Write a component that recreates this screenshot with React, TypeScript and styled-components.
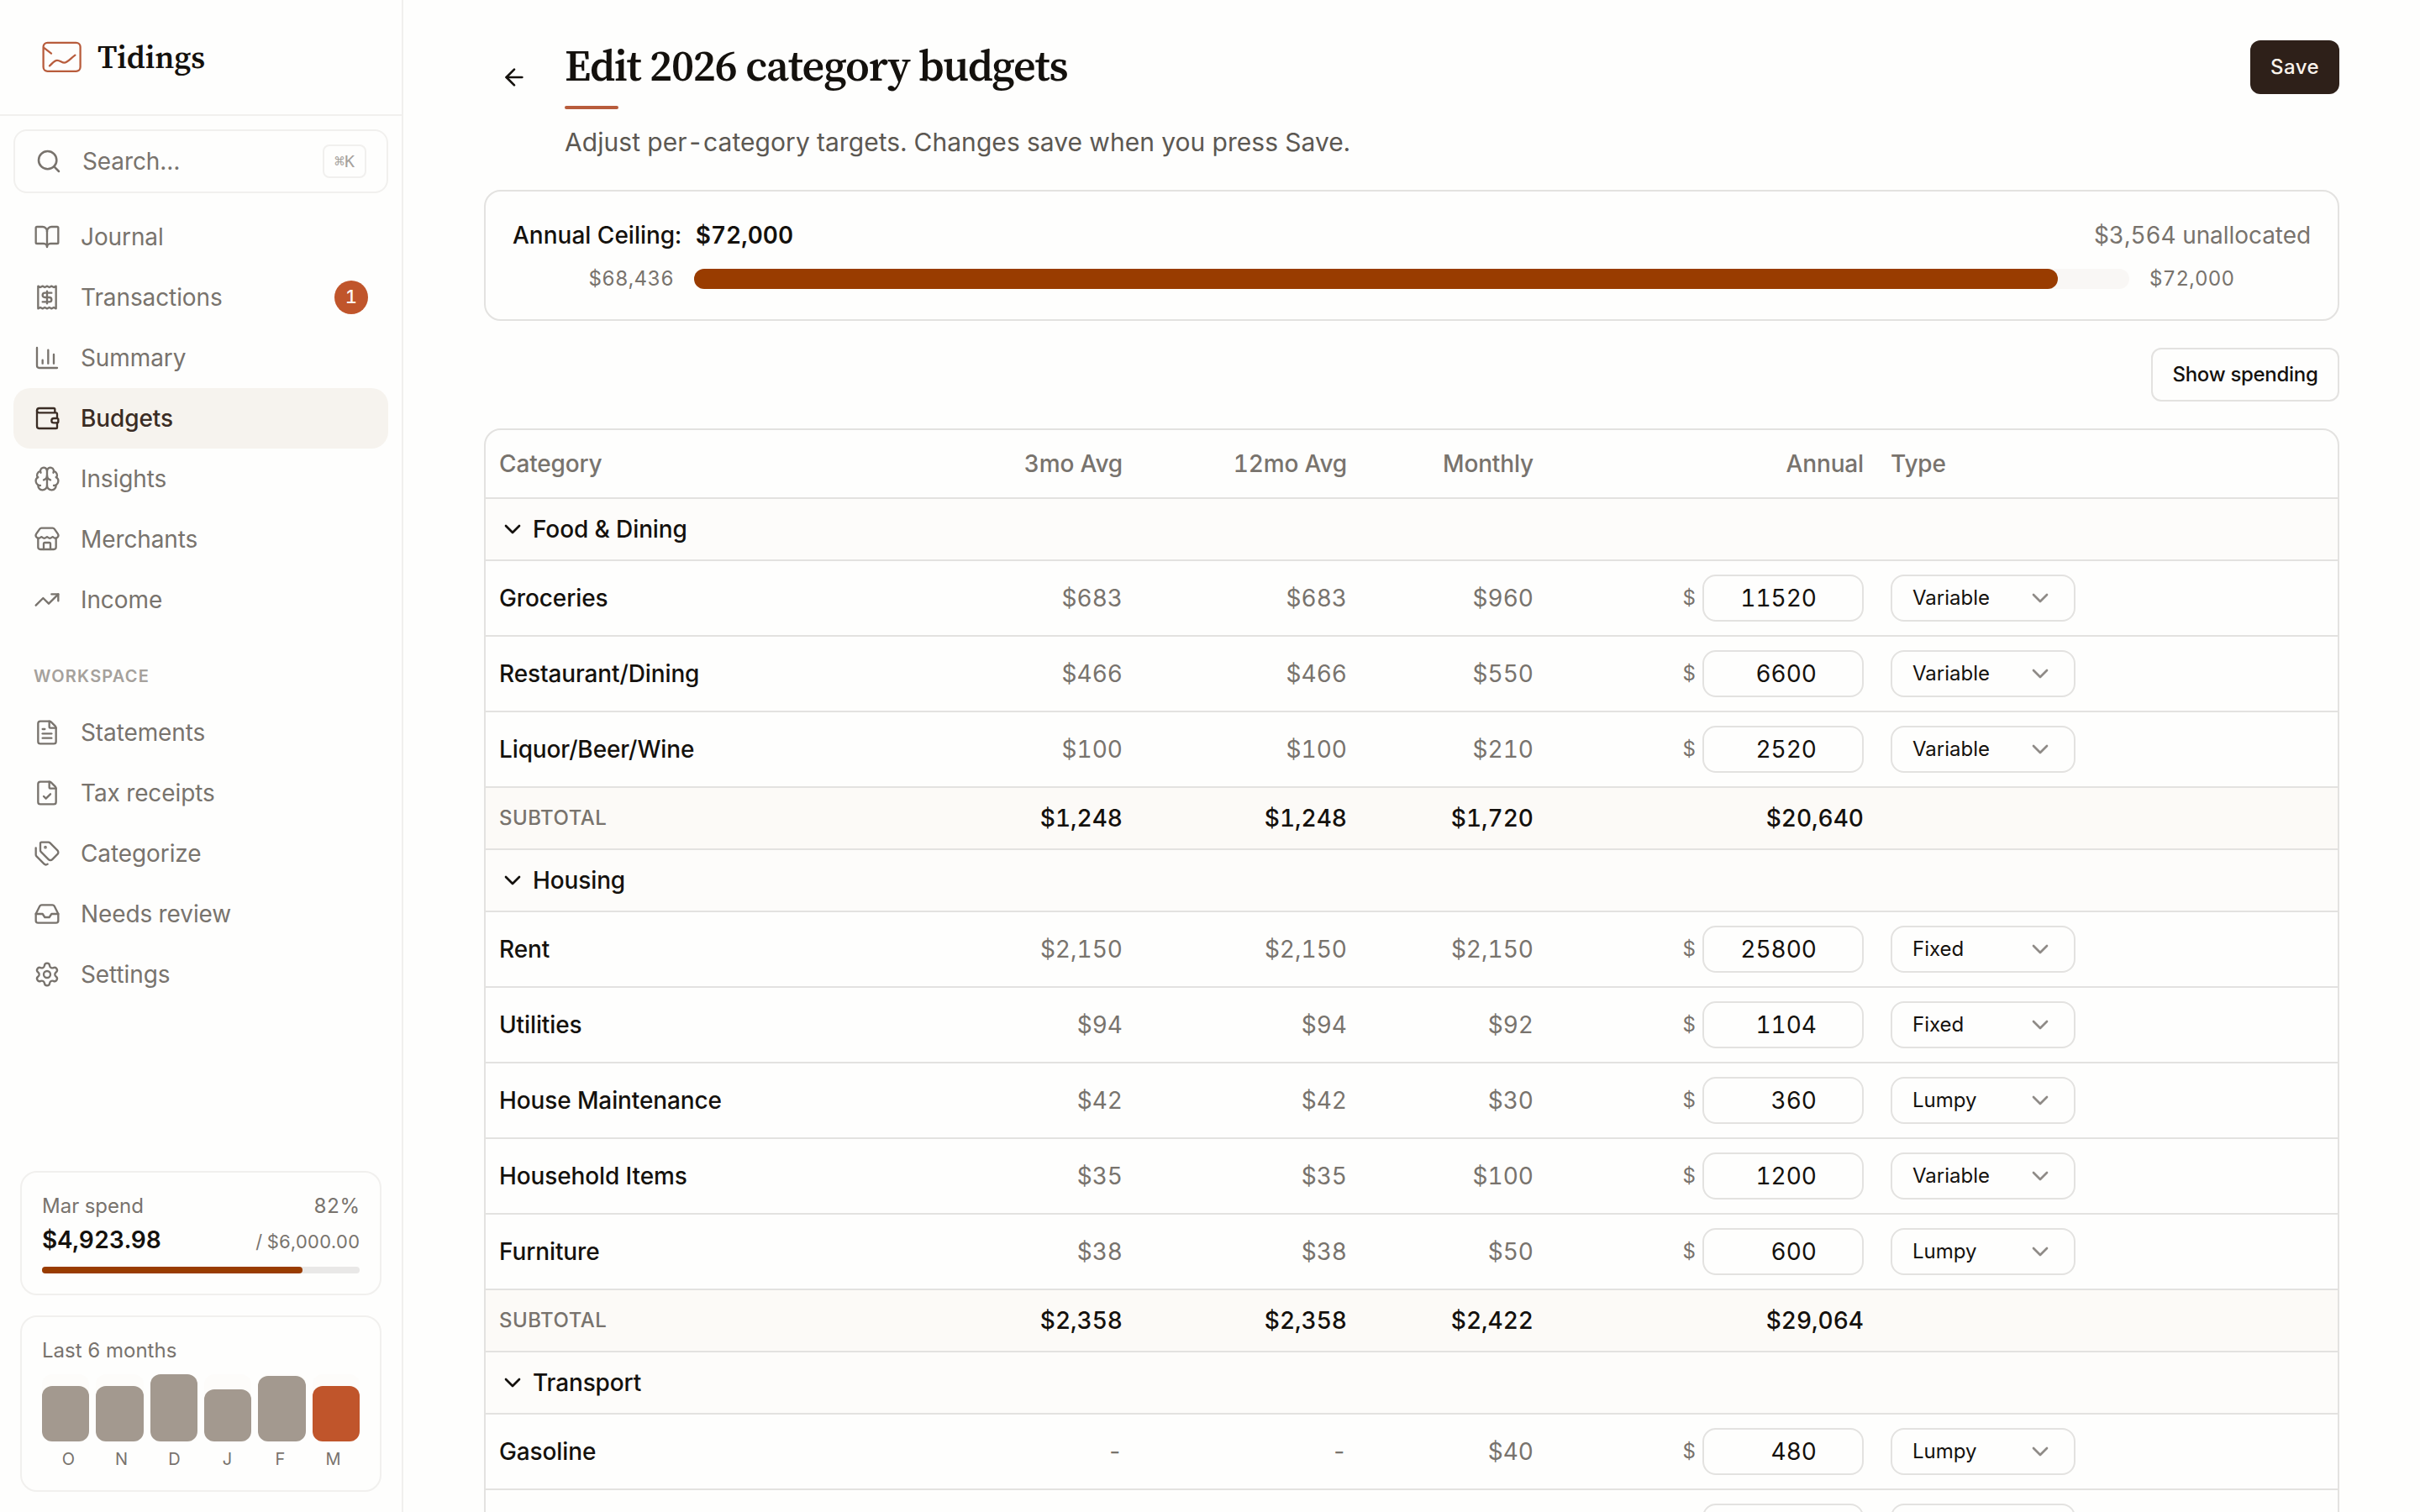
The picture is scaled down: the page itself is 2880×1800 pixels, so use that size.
import styled, { createGlobalStyle } from 'styled-components'
import {
	ArrowLeft,
	BookOpen,
	Brain,
	ChartColumn,
	ChevronDown,
	FileCheck,
	FileText,
	Inbox,
	type LucideIcon,
	Receipt,
	Search,
	Settings,
	Store,
	Tags,
	TrendingUp,
	Wallet,
} from 'lucide-react'

const theme = {
	colors: {
		background: '#fefefd',
		text: '#14110d',
		muted: '#78736d',
		faint: '#a5a19c',
		border: '#e3e2e0',
		borderLight: '#f1f0ee',
		active: '#f6f3ee',
		accent: '#c0552b',
		progress: '#993c00',
		bar: '#a3998f',
		primary: '#2e2019',
	},
	fonts: {
		sans: "Inter, 'Liberation Sans', sans-serif",
		serif: "'Source Serif 4', 'Noto Serif', serif",
		mono: "'DejaVu Sans Mono', monospace",
	},
}

type NavItemType = {
	title: string
	icon: LucideIcon
	active?: boolean
	badge?: number
}

type RowType = {
	name: string
	avg3: string
	avg12: string
	monthly: string
	annual: string
	type: string
}

type GroupType = {
	title: string
	rows: RowType[]
	subtotal?: string[]
}

const mainNav: NavItemType[] = [
	{ title: 'Journal', icon: BookOpen },
	{ title: 'Transactions', icon: Receipt, badge: 1 },
	{ title: 'Summary', icon: ChartColumn },
	{ title: 'Budgets', icon: Wallet, active: true },
	{ title: 'Insights', icon: Brain },
	{ title: 'Merchants', icon: Store },
	{ title: 'Income', icon: TrendingUp },
]

const workspaceNav: NavItemType[] = [
	{ title: 'Statements', icon: FileText },
	{ title: 'Tax receipts', icon: FileCheck },
	{ title: 'Categorize', icon: Tags },
	{ title: 'Needs review', icon: Inbox },
	{ title: 'Settings', icon: Settings },
]

const months = [
	{ label: 'O', height: 66 },
	{ label: 'N', height: 66 },
	{ label: 'D', height: 80 },
	{ label: 'J', height: 62 },
	{ label: 'F', height: 78 },
	{ label: 'M', height: 66, current: true },
]

const groups: GroupType[] = [
	{
		title: 'Food & Dining',
		rows: [
			{ name: 'Groceries', avg3: '$683', avg12: '$683', monthly: '$960', annual: '11520', type: 'Variable' },
			{ name: 'Restaurant/Dining', avg3: '$466', avg12: '$466', monthly: '$550', annual: '6600', type: 'Variable' },
			{ name: 'Liquor/Beer/Wine', avg3: '$100', avg12: '$100', monthly: '$210', annual: '2520', type: 'Variable' },
		],
		subtotal: ['$1,248', '$1,248', '$1,720', '$20,640'],
	},
	{
		title: 'Housing',
		rows: [
			{ name: 'Rent', avg3: '$2,150', avg12: '$2,150', monthly: '$2,150', annual: '25800', type: 'Fixed' },
			{ name: 'Utilities', avg3: '$94', avg12: '$94', monthly: '$92', annual: '1104', type: 'Fixed' },
			{ name: 'House Maintenance', avg3: '$42', avg12: '$42', monthly: '$30', annual: '360', type: 'Lumpy' },
			{ name: 'Household Items', avg3: '$35', avg12: '$35', monthly: '$100', annual: '1200', type: 'Variable' },
			{ name: 'Furniture', avg3: '$38', avg12: '$38', monthly: '$50', annual: '600', type: 'Lumpy' },
		],
		subtotal: ['$2,358', '$2,358', '$2,422', '$29,064'],
	},
	{
		title: 'Transport',
		rows: [
			{ name: 'Gasoline', avg3: '-', avg12: '-', monthly: '$40', annual: '480', type: 'Lumpy' },
			{ name: '', avg3: '', avg12: '', monthly: '', annual: '', type: '' },
		],
	},
]

function Logo() {
	return (
		<svg width="48" height="38" viewBox="0 0 48 38" fill="none" stroke="#b85c3c" strokeWidth="2.3" strokeLinecap="round" strokeLinejoin="round">
			<rect x="1.6" y="1.8" width="44" height="34" rx="5" />
			<path d="M2.6 8.2 11 14.6" />
			<path d="M9 29.4C12.4 26.4 14.6 22.8 18 22.8c3.400 0 5.400 2.900 8.600 2.900 3.400 0 7.600-5.200 12.800-9.100" />
		</svg>
	)
}

function NavItem(props: { item: NavItemType }) {
	const Icon = props.item.icon
	return (
		<NavLink $active={props.item.active}>
			<Icon size={32} strokeWidth={1.75} />
			<NavTitle>{props.item.title}</NavTitle>
			{props.item.badge && <Badge>{props.item.badge}</Badge>}
		</NavLink>
	)
}

function Sidebar() {
	return (
		<StyledSidebar>
			<Brand>
				<Logo />
				<BrandName>Tidings</BrandName>
			</Brand>
			<Nav>
				<SearchButton>
					<Search size={32} strokeWidth={1.9} />
					<NavTitle>Search…</NavTitle>
					<Kbd>⌘K</Kbd>
				</SearchButton>
				{mainNav.map((item) => (
					<NavItem key={item.title} item={item} />
				))}
				<NavLabel>WORKSPACE</NavLabel>
				{workspaceNav.map((item) => (
					<NavItem key={item.title} item={item} />
				))}
			</Nav>
			<Widgets>
				<Widget>
					<WidgetRow>
						<WidgetTitle>Mar spend</WidgetTitle>
						<WidgetTitle>82%</WidgetTitle>
					</WidgetRow>
					<SpendRow>
						<Spent>$4,923.98</Spent>
						<Limit>/ $6,000.00</Limit>
					</SpendRow>
					<SpendTrack>
						<SpendFill style={{ width: '82%' }} />
					</SpendTrack>
				</Widget>
				<Widget>
					<WidgetTitle>Last 6 months</WidgetTitle>
					<Bars>
						{months.map((month) => (
							<BarTrack key={month.label}>
								<Bar $current={month.current} style={{ height: month.height }} />
							</BarTrack>
						))}
					</Bars>
					<BarLabels>
						{months.map((month) => (
							<span key={month.label}>{month.label}</span>
						))}
					</BarLabels>
				</Widget>
			</Widgets>
		</StyledSidebar>
	)
}

function BudgetRow(props: { row: RowType }) {
	const { name, avg3, avg12, monthly, annual, type } = props.row
	return (
		<ItemRow>
			<Name>{name}</Name>
			<NumberCell>{avg3}</NumberCell>
			<NumberCell>{avg12}</NumberCell>
			<NumberCell>{monthly}</NumberCell>
			<AnnualCell>
				{name && <Currency>$</Currency>}
				<AnnualInput defaultValue={annual} />
			</AnnualCell>
			<Cell>
				<Select>
					{type}
					<ChevronDown size={32} strokeWidth={2} />
				</Select>
			</Cell>
		</ItemRow>
	)
}

function BudgetTable() {
	return (
		<Table>
			<HeadRow>
				<Cell>Category</Cell>
				<NumberCell>3mo Avg</NumberCell>
				<NumberCell>12mo Avg</NumberCell>
				<NumberCell>Monthly</NumberCell>
				<NumberCell>Annual</NumberCell>
				<Cell>Type</Cell>
			</HeadRow>
			{groups.map((group) => (
				<div key={group.title}>
					<GroupRow>
						<ChevronDown size={32} strokeWidth={2} />
						{group.title}
					</GroupRow>
					{group.rows.map((row) => (
						<BudgetRow key={row.name} row={row} />
					))}
					{group.subtotal && (
						<SubtotalRow>
							<SubtotalLabel>SUBTOTAL</SubtotalLabel>
							{group.subtotal.map((value, index) => (
								<SubtotalValue key={index}>{value}</SubtotalValue>
							))}
						</SubtotalRow>
					)}
				</div>
			))}
		</Table>
	)
}

export default function App() {
	return (
		<>
			<GlobalStyle />
			<Layout>
				<Sidebar />
				<Main>
					<PageHeader>
						<BackButton aria-label="Back">
							<ArrowLeft size={32} strokeWidth={2} />
						</BackButton>
						<Heading>
							<Title>Edit 2026 category budgets</Title>
							<Underline />
							<Subtitle>Adjust per-category targets. Changes save when you press Save.</Subtitle>
						</Heading>
						<SaveButton>Save</SaveButton>
					</PageHeader>
					<CeilingCard>
						<CeilingRow>
							<Ceiling>
								Annual Ceiling: <CeilingValue>$72,000</CeilingValue>
							</Ceiling>
							<Unallocated>$3,564 unallocated</Unallocated>
						</CeilingRow>
						<Progress>
							<ProgressLabel $right>$68,436</ProgressLabel>
							<ProgressTrack>
								<ProgressFill style={{ width: `${(68436 / 72000) * 100}%` }} />
							</ProgressTrack>
							<ProgressLabel>$72,000</ProgressLabel>
						</Progress>
					</CeilingCard>
					<OutlineButton>Show spending</OutlineButton>
					<BudgetTable />
				</Main>
			</Layout>
		</>
	)
}

const GlobalStyle = createGlobalStyle`
	*, *::before, *::after {
		box-sizing: border-box;
		margin: 0;
	}

	body {
		background: ${theme.colors.background};
		color: ${theme.colors.text};
		font-family: ${theme.fonts.sans};
		font-size: 28px;
		line-height: 40px;
		font-variant-numeric: tabular-nums;
		overflow: hidden;
		-webkit-font-smoothing: antialiased;
	}

	button, input {
		font: inherit;
		font-variant-numeric: inherit;
		color: inherit;
	}

	svg {
		flex-shrink: 0;
	}
`
const Layout = styled.div`
	display: flex;
	height: 1800px;
	overflow: hidden;
`

// Sidebar
const StyledSidebar = styled.aside`
	display: flex;
	flex-direction: column;
	width: 480px;
	flex-shrink: 0;
	border-right: 2px solid ${theme.colors.borderLight};
`
const Brand = styled.div`
	display: flex;
	align-items: center;
	gap: 18px;
	height: 138px;
	padding-left: 50px;
	border-bottom: 2px solid ${theme.colors.borderLight};
`
const BrandName = styled.span`
	font-family: ${theme.fonts.serif};
	font-size: 38px;
	font-weight: 600;
	line-height: 42px;
	letter-spacing: -0.1px;
`
const Nav = styled.nav`
	flex: 1;
	padding: 16px;
`
const SearchButton = styled.div`
	display: flex;
	align-items: center;
	gap: 24px;
	height: 76px;
	margin-bottom: 16px;
	padding: 0 24px;
	border: 2px solid ${theme.colors.borderLight};
	border-radius: 16px;
	color: ${theme.colors.muted};
`
const Kbd = styled.kbd`
	display: flex;
	align-items: center;
	justify-content: center;
	width: 52px;
	height: 40px;
	border: 2px solid ${theme.colors.borderLight};
	border-radius: 8px;
	color: ${theme.colors.faint};
	font-family: ${theme.fonts.mono};
	font-size: 20px;
	line-height: 1;
`
const NavLink = styled.a<{ $active?: boolean }>`
	display: flex;
	align-items: center;
	gap: 24px;
	height: 72px;
	padding: 0 24px;
	border-radius: 20px;
	background: ${(props) => (props.$active ? theme.colors.active : 'transparent')};
	color: ${(props) => (props.$active ? '#3a2c24' : theme.colors.muted)};
	font-weight: ${(props) => (props.$active ? 500 : 400)};
`
const NavTitle = styled.span`
	flex: 1;
	letter-spacing: -0.1px;
`
const Badge = styled.span`
	width: 40px;
	height: 40px;
	border-radius: 50%;
	background: ${theme.colors.accent};
	color: #fdf6f0;
	font-size: 22px;
	font-weight: 500;
	line-height: 38px;
	text-align: center;
`
const NavLabel = styled.div`
	padding: 40px 24px 16px;
	color: ${theme.colors.faint};
	font-size: 20px;
	font-weight: 600;
	line-height: 30px;
	letter-spacing: 1.2px;
`
const Widgets = styled.div`
	display: flex;
	flex-direction: column;
	gap: 24px;
	padding: 24px;
`
const Widget = styled.section`
	padding: 24px;
	border: 2px solid ${theme.colors.borderLight};
	border-radius: 20px;
`
const WidgetRow = styled.div`
	display: flex;
	justify-content: space-between;
`
const WidgetTitle = styled.div`
	color: ${theme.colors.muted};
	font-size: 24px;
	line-height: 32px;
`
const SpendRow = styled.div`
	display: flex;
	align-items: baseline;
	justify-content: space-between;
	margin: 4px 0 12px;
`
const Spent = styled.span`
	font-weight: 600;
	letter-spacing: 0;
`
const Limit = styled.span`
	color: ${theme.colors.muted};
	font-size: 22px;
	line-height: 32px;
	letter-spacing: -0.15px;
`
const SpendTrack = styled.div`
	height: 8px;
	border-radius: 4px;
	background: #e9e8e7;
`
const SpendFill = styled.div`
	height: 100%;
	border-radius: 4px;
	background: ${theme.colors.progress};
`
const Bars = styled.div`
	display: flex;
	gap: 8px;
	height: 80px;
	margin-top: 12px;
`
const BarTrack = styled.div`
	display: flex;
	flex: 1;
	align-items: flex-end;
	border-radius: 12px;
	background: #fdfcfa;
`
const Bar = styled.div<{ $current?: boolean }>`
	width: 100%;
	border-radius: 12px;
	background: ${(props) => (props.$current ? theme.colors.accent : theme.colors.bar)};
`
const BarLabels = styled.div`
	display: grid;
	grid-template-columns: repeat(6, 1fr);
	margin-top: 8px;
	color: ${theme.colors.muted};
	font-size: 20px;
	line-height: 26px;
	text-align: center;
`

// Page
const Main = styled.main`
	display: flex;
	flex-direction: column;
	flex: 1;
	padding: 48px 96px 0;
`
const PageHeader = styled.header`
	display: flex;
	align-items: flex-start;
	margin-bottom: 34px;
`
const BackButton = styled.button`
	display: flex;
	align-items: center;
	justify-content: center;
	width: 72px;
	height: 72px;
	margin: 8px 24px 0 0;
	padding: 0;
	border: none;
	background: none;
`
const Heading = styled.div`
	flex: 1;
`
const Title = styled.h1`
	font-family: ${theme.fonts.serif};
	font-size: 52px;
	font-weight: 600;
	line-height: 60px;
	letter-spacing: -1.1px;
`
const Underline = styled.div`
	width: 64px;
	height: 4px;
	margin: 18px 0 16px;
	border-radius: 2px;
	background: #b85c3c;
`
const Subtitle = styled.p`
	color: #5c5852;
	font-size: 30px;
	line-height: 46px;
	letter-spacing: 0.06px;
`
const SaveButton = styled.button`
	width: 106px;
	height: 64px;
	padding: 0;
	border: none;
	border-radius: 12px;
	background: ${theme.colors.primary};
	color: #faf3ec;
	font-size: 24px;
	font-weight: 500;
	letter-spacing: 0.5px;
`
const CeilingCard = styled.section`
	flex-shrink: 0;
	padding: 32px;
	border: 2px solid ${theme.colors.border};
	border-radius: 20px;
`
const CeilingRow = styled.div`
	display: flex;
	justify-content: space-between;
	margin-bottom: 16px;
`
const Ceiling = styled.div`
	display: flex;
	gap: 17px;
	font-weight: 500;
`
const CeilingValue = styled.span`
	font-weight: 600;
`
const Unallocated = styled.span`
	color: ${theme.colors.muted};
	letter-spacing: -0.06px;
`
const Progress = styled.div`
	display: grid;
	grid-template-columns: 192px 1fr 192px;
	gap: 24px;
	align-items: center;
`
const ProgressLabel = styled.span<{ $right?: boolean }>`
	color: ${theme.colors.muted};
	font-size: 24px;
	line-height: 32px;
	letter-spacing: 0.25px;
	text-align: ${(props) => (props.$right ? 'right' : 'left')};
`
const ProgressTrack = styled.div`
	height: 24px;
	border-radius: 12px;
	background: #f9f7f5;
`
const ProgressFill = styled.div`
	height: 100%;
	border-radius: 12px;
	background: ${theme.colors.progress};
`
const OutlineButton = styled.button`
	flex-shrink: 0;
	align-self: flex-end;
	width: 224px;
	height: 64px;
	margin: 32px 0;
	padding: 0;
	border: 2px solid ${theme.colors.border};
	border-radius: 12px;
	background: none;
	font-size: 24px;
	font-weight: 500;
	letter-spacing: -0.3px;
`

// Table
const Table = styled.section`
	flex-shrink: 0;
	border: 2px solid ${theme.colors.border};
	border-radius: 20px;
	overflow: hidden;
`
const Row = styled.div`
	display: grid;
	grid-template-columns: 534px 240px 267px 222px 393px 1fr;
	align-items: center;
	border-bottom: 2px solid ${theme.colors.border};
`
const HeadRow = styled(Row)`
	height: 82px;
	color: ${theme.colors.muted};
	font-weight: 500;
	letter-spacing: -0.15px;
`
const ItemRow = styled(Row)`
	height: 90px;
`
const SubtotalRow = styled(Row)`
	height: 74px;
	background: #fcfaf7;
	font-weight: 500;
`
const GroupRow = styled.div`
	display: flex;
	align-items: center;
	gap: 8px;
	height: 74px;
	padding: 0 16px;
	border-bottom: 2px solid ${theme.colors.border};
	background: #fdfcfa;
	font-weight: 500;
	letter-spacing: -0.12px;
`
const Cell = styled.div`
	padding: 0 16px;
`
const Name = styled(Cell)`
	font-weight: 500;
	letter-spacing: -0.12px;
`
const NumberCell = styled(Cell)`
	color: ${theme.colors.muted};
	text-align: right;
`
const SubtotalLabel = styled(Cell)`
	color: ${theme.colors.muted};
	font-size: 24px;
	letter-spacing: 0.02em;
`
const SubtotalValue = styled(NumberCell)`
	color: ${theme.colors.text};
`
const AnnualCell = styled(Cell)`
	display: flex;
	align-items: center;
	justify-content: flex-end;
	gap: 8px;
`
const Currency = styled.span`
	color: ${theme.colors.muted};
	font-size: 24px;
`
const AnnualInput = styled.input`
	width: 192px;
	height: 56px;
	padding: 0 54px 0 22px;
	border: 2px solid ${theme.colors.border};
	border-radius: 16px;
	background: none;
	text-align: right;
`
const Select = styled.div`
	display: flex;
	align-items: center;
	justify-content: space-between;
	width: 220px;
	height: 56px;
	padding: 0 24px;
	border: 2px solid ${theme.colors.border};
	border-radius: 16px;
	font-size: 24px;

	svg {
		color: #8f8b87;
	}
`
